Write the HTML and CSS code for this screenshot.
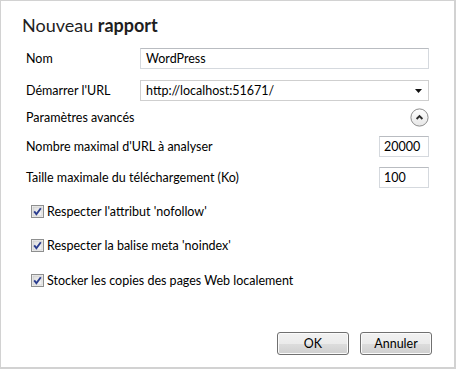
FILE: index.html
```html
<!DOCTYPE html>
<html lang="fr">
<head>
<meta charset="utf-8">
<title>Nouveau rapport</title>
<link rel="stylesheet" href="styles.css">
</head>
<body>
<div class="window">
  <h1 class="title">Nouveau <b>rapport</b></h1>
  <div class="row r-nom">
    <span class="label">Nom</span>
    <div class="field">WordPress</div>
  </div>
  <div class="row r-url">
    <span class="label">Démarrer l'URL</span>
    <div class="field select">http://localhost:51671/
      <svg class="arrow" width="7" height="4" viewBox="0 0 7 4"><polygon points="0,0 7,0 3.5,4" fill="#111"/></svg>
    </div>
  </div>
  <div class="row r-adv">
    <span class="label">Paramètres avancés</span>
    <svg class="collapse" width="19" height="19" viewBox="0 0 19 19">
      <defs>
        <linearGradient id="cg" x1="0" y1="0" x2="0" y2="1">
          <stop offset="0" stop-color="#ffffff"/>
          <stop offset="1" stop-color="#e6e6e6"/>
        </linearGradient>
      </defs>
      <circle cx="9.5" cy="9.5" r="8.6" fill="url(#cg)" stroke="#8c8c8c" stroke-width="1"/>
      <path d="M6.6 11 L9.5 8.1 L12.4 11" fill="none" stroke="#2a2a2a" stroke-width="1.9"/>
    </svg>
  </div>
  <div class="row r-max">
    <span class="label">Nombre maximal d'URL à analyser</span>
    <div class="field small">20000</div>
  </div>
  <div class="row r-size">
    <span class="label">Taille maximale du téléchargement (Ko)</span>
    <div class="field small">100</div>
  </div>
  <div class="check c1">
    <svg class="box" width="13" height="13" viewBox="0 0 13 13">
      <defs>
        <linearGradient id="bg" x1="0" y1="0" x2="1" y2="1">
          <stop offset="0" stop-color="#dcdcdc"/>
          <stop offset="1" stop-color="#f8f8f8"/>
        </linearGradient>
      </defs>
      <rect x="0.5" y="0.5" width="12" height="12" fill="#f4f4f4" stroke="#8e8f8f"/>
      <rect x="2" y="2" width="9" height="9" fill="url(#bg)" stroke="#c3c3c3" stroke-width="0.6"/>
      <path d="M3.2 6.4 L5.4 9.2 L9.8 3.2" fill="none" stroke="#2b3d8f" stroke-width="1.9"/>
    </svg>
    <span>Respecter l'attribut 'nofollow'</span>
  </div>
  <div class="check c2">
    <svg class="box" width="13" height="13" viewBox="0 0 13 13">
      <rect x="0.5" y="0.5" width="12" height="12" fill="#f4f4f4" stroke="#8e8f8f"/>
      <rect x="2" y="2" width="9" height="9" fill="url(#bg)" stroke="#c3c3c3" stroke-width="0.6"/>
      <path d="M3.2 6.4 L5.4 9.2 L9.8 3.2" fill="none" stroke="#2b3d8f" stroke-width="1.9"/>
    </svg>
    <span>Respecter la balise meta 'noindex'</span>
  </div>
  <div class="check c3">
    <svg class="box" width="13" height="13" viewBox="0 0 13 13">
      <rect x="0.5" y="0.5" width="12" height="12" fill="#f4f4f4" stroke="#8e8f8f"/>
      <rect x="2" y="2" width="9" height="9" fill="url(#bg)" stroke="#c3c3c3" stroke-width="0.6"/>
      <path d="M3.2 6.4 L5.4 9.2 L9.8 3.2" fill="none" stroke="#2b3d8f" stroke-width="1.9"/>
    </svg>
    <span>Stocker les copies des pages Web localement</span>
  </div>
  <div class="buttons">
    <button class="btn ok">OK</button>
    <button class="btn">Annuler</button>
  </div>
</div>
</body>
</html>
```
FILE: styles.css
```css
html, body {
  margin: 0;
  padding: 0;
  background: #ffffff;
}
body {
  font-family: Lato, "Open Sans", sans-serif;
  font-size: 12.5px;
  color: #000;
}
.window {
  box-sizing: border-box;
  width: 456px;
  height: 369px;
  border: 1px solid #d2d2d2;
  border-right-width: 2px;
  border-bottom-width: 2px;
  padding: 12px 25px 12px 25px;
  display: flex;
  flex-direction: column;
  background: #fff;
}
.title {
  margin: 0 0 0 -4px;
  font-size: 18px;
  line-height: 24px;
  font-weight: normal;
  color: #1e1e1e;
}
.title b {
  font-weight: bold;
}
.row {
  display: flex;
  align-items: center;
  justify-content: space-between;
  height: 21px;
}
.r-nom { margin-top: 11px; }
.r-url { margin-top: 11px; }
.r-adv { margin-top: 7px; height: 19px; }
.r-max { margin-top: 9px; }
.r-size { margin-top: 10px; }
.label {
  white-space: nowrap;
}
.field {
  box-sizing: border-box;
  width: 289px;
  height: 21px;
  border: 1px solid #d5d9de;
  border-top-color: #b9bcc1;
  padding: 0 5px;
  display: flex;
  align-items: center;
  line-height: 19px;
}
.select {
  justify-content: space-between;
  border-color: #cfcfcf;
}
.arrow {
  margin-right: 1px;
}
.small {
  width: 50px;
  padding: 0 4px;
}
.check {
  display: flex;
  align-items: center;
  gap: 3px;
  height: 17px;
  margin-left: 5px;
}
.c1 { margin-top: 15px; }
.c2 { margin-top: 17px; }
.c3 { margin-top: 18px; }
.buttons {
  margin-top: auto;
  display: flex;
  justify-content: flex-end;
  gap: 11px;
  margin-right: -3px;
}
.btn {
  box-sizing: border-box;
  width: 72px;
  height: 23px;
  border: 1px solid #707070;
  border-radius: 3px;
  background: linear-gradient(#f2f2f2 0%, #ebebeb 50%, #dddddd 51%, #cfcfcf 100%);
  box-shadow: inset 0 0 0 1px #fbfbfb;
  font-family: Lato, "Open Sans", sans-serif;
  font-size: 12.5px;
  color: #000;
  padding: 0;
}
```
